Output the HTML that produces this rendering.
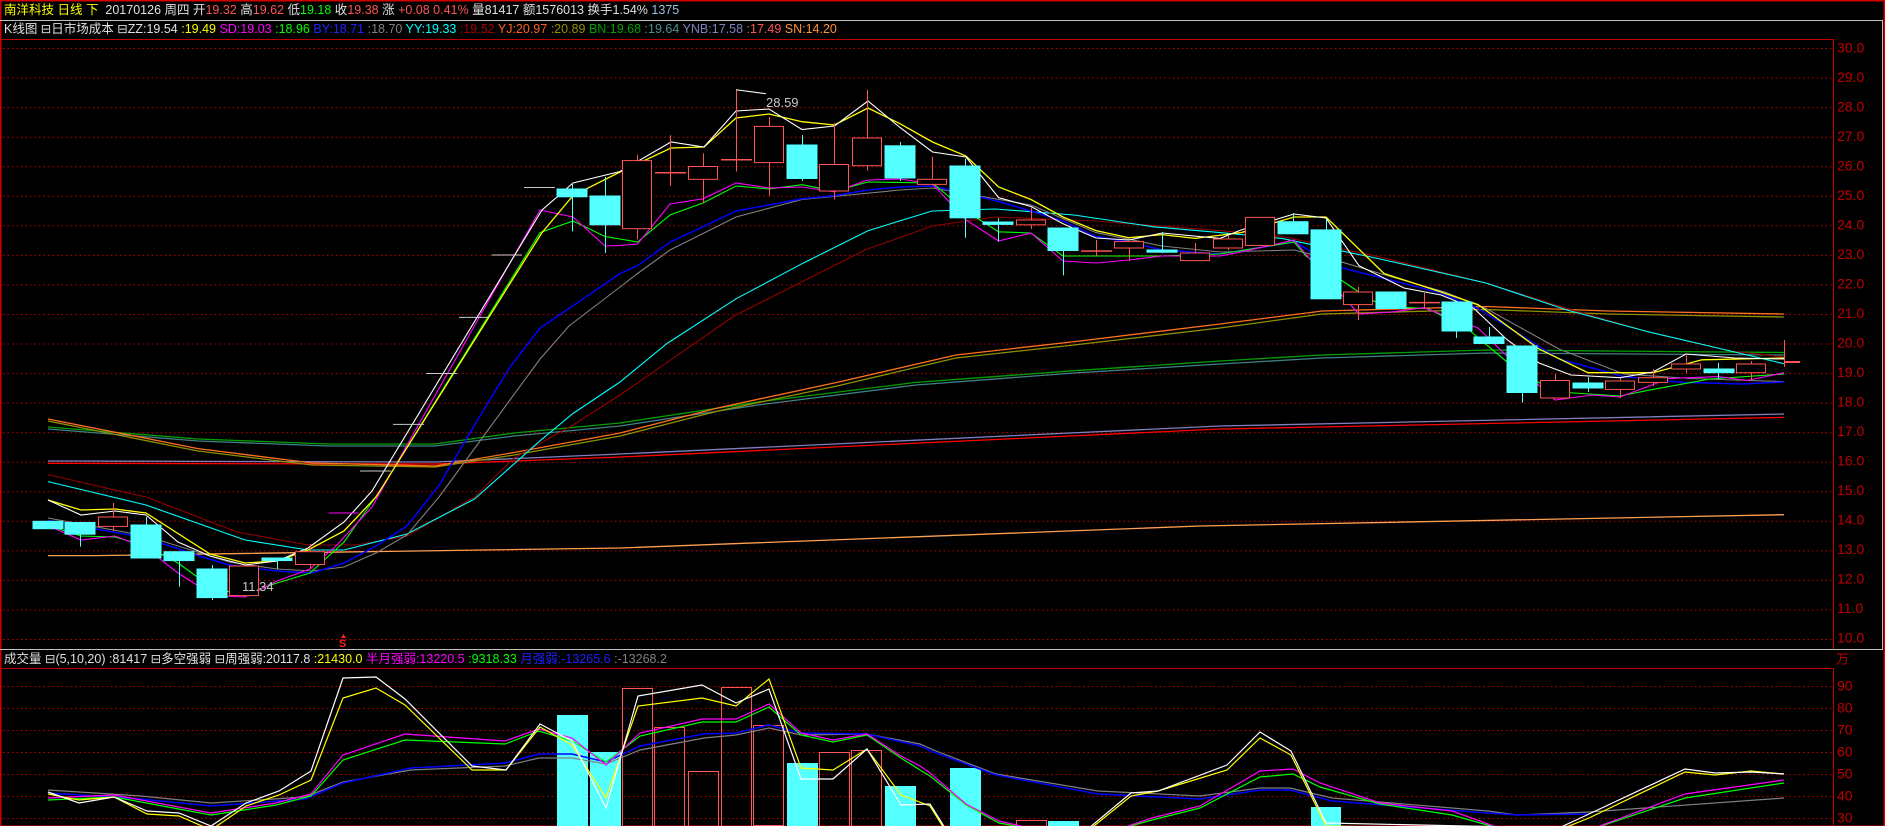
<!DOCTYPE html>
<html><head><meta charset="utf-8"><style>
html,body{margin:0;padding:0;background:#000;}
body{width:1885px;height:826px;overflow:hidden;position:relative;font-family:"Liberation Sans","Noto Sans CJK SC",sans-serif;}
.row{position:absolute;left:4px;white-space:pre;font-size:12.5px;line-height:16px;}
.w{color:#e0e0e0}.y{color:#ffff00}.r{color:#ff5454}.g{color:#00ff00}.m{color:#ff00ff}.b{color:#2020ff}.gr{color:#808080}.c{color:#00ffff}.dr{color:#a00000}.o{color:#ff6020}.ol{color:#909000}.dg{color:#00a000}.tg{color:#509090}.lv{color:#8080c0}.lo{color:#ff9040}.lb{color:#a0c0e0}
svg{position:absolute;left:0;top:0}
</style></head><body>
<svg width="1885" height="826" viewBox="0 0 1885 826" xmlns="http://www.w3.org/2000/svg">
<rect x="0" y="0" width="1885" height="826" fill="#000"/>
<!-- frames -->
<rect x="0.5" y="0.5" width="1884" height="826" fill="none" stroke="#d00000" stroke-width="2"/>
<line x1="0" y1="20.5" x2="1883" y2="20.5" stroke="#c0c0c0"/>
<line x1="1882.5" y1="20" x2="1882.5" y2="649" stroke="#c0c0c0"/>
<line x1="0" y1="649.5" x2="1883" y2="649.5" stroke="#c0c0c0"/>
<line x1="2" y1="39.5" x2="1833" y2="39.5" stroke="#c00000"/>
<line x1="1833.5" y1="39" x2="1833.5" y2="649" stroke="#c00000"/>
<line x1="2" y1="668.5" x2="1833" y2="668.5" stroke="#c00000"/>
<line x1="1833.5" y1="668" x2="1833.5" y2="826" stroke="#c00000"/>
<!-- grid main -->
<g stroke="#c00000" stroke-dasharray="1.5 3" stroke-width="1">
<line x1="3" x2="1833" y1="48.5" y2="48.5"/><line x1="3" x2="1833" y1="78" y2="78"/><line x1="3" x2="1833" y1="107.6" y2="107.6"/><line x1="3" x2="1833" y1="137.2" y2="137.2"/><line x1="3" x2="1833" y1="166.7" y2="166.7"/><line x1="3" x2="1833" y1="196.3" y2="196.3"/><line x1="3" x2="1833" y1="225.8" y2="225.8"/><line x1="3" x2="1833" y1="255.4" y2="255.4"/><line x1="3" x2="1833" y1="284.9" y2="284.9"/><line x1="3" x2="1833" y1="314.5" y2="314.5"/><line x1="3" x2="1833" y1="344" y2="344"/><line x1="3" x2="1833" y1="373.6" y2="373.6"/><line x1="3" x2="1833" y1="403.1" y2="403.1"/><line x1="3" x2="1833" y1="432.7" y2="432.7"/><line x1="3" x2="1833" y1="462.2" y2="462.2"/><line x1="3" x2="1833" y1="491.8" y2="491.8"/><line x1="3" x2="1833" y1="521.3" y2="521.3"/><line x1="3" x2="1833" y1="550.9" y2="550.9"/><line x1="3" x2="1833" y1="580.4" y2="580.4"/><line x1="3" x2="1833" y1="610" y2="610"/><line x1="3" x2="1833" y1="639.5" y2="639.5"/>
<line x1="3" x2="1833" y1="686.5" y2="686.5"/><line x1="3" x2="1833" y1="708.5" y2="708.5"/><line x1="3" x2="1833" y1="730.5" y2="730.5"/><line x1="3" x2="1833" y1="752.5" y2="752.5"/><line x1="3" x2="1833" y1="774.5" y2="774.5"/><line x1="3" x2="1833" y1="796.5" y2="796.5"/><line x1="3" x2="1833" y1="818.5" y2="818.5"/>
</g>
<g font-family="Liberation Sans, sans-serif" font-size="14" fill="#c00000" dominant-baseline="middle">
<text x="1837" y="49">30.0</text><text x="1837" y="78.5">29.0</text><text x="1837" y="108">28.0</text><text x="1837" y="137.5">27.0</text><text x="1837" y="167">26.0</text><text x="1837" y="196.5">25.0</text><text x="1837" y="226">24.0</text><text x="1837" y="255.5">23.0</text><text x="1837" y="285">22.0</text><text x="1837" y="314.5">21.0</text><text x="1837" y="344">20.0</text><text x="1837" y="373.5">19.0</text><text x="1837" y="403">18.0</text><text x="1837" y="432.5">17.0</text><text x="1837" y="462">16.0</text><text x="1837" y="491.5">15.0</text><text x="1837" y="521">14.0</text><text x="1837" y="550.5">13.0</text><text x="1837" y="580">12.0</text><text x="1837" y="609.5">11.0</text><text x="1837" y="639">10.0</text>
<text x="1837" y="687">90</text><text x="1837" y="709">80</text><text x="1837" y="731">70</text><text x="1837" y="753">60</text><text x="1837" y="775">50</text><text x="1837" y="797">40</text><text x="1837" y="819">30</text>
<text x="1836" y="660" font-family="Noto Sans CJK SC, sans-serif" font-size="13">万</text>
</g>
<!-- long MAs -->
<g fill="none" stroke-width="1.3">
<polyline stroke="#ffa050" points="48,555.6 97,555.6 620,548 1200,526 1784,514.7"/>
<polyline stroke="#8080c0" points="48,461 435,462 620,454 1220,426 1784,414"/>
<polyline stroke="#ff0000" points="48,463.4 435,464 620,457 1220,429 1784,417.4"/>
<polyline stroke="#408080" points="48,429 198,441 328,446 435,446 514,436 620,426 758,405 916,385 1074,373 1220,364 1322,358 1486,353 1784,355"/>
<polyline stroke="#00a000" points="48,427 198,439 328,444 435,444 514,433 620,423 758,402 916,382.4 1074,370.7 1220,361 1322,355 1486,350 1784,352.5"/>
<polyline stroke="#909000" points="48,421 198,451 312,465 435,467 514,455 620,436 718,411 837,386 956,358 1074,345 1220,328 1322,314 1486,309.5 1608,314 1784,317"/>
<polyline stroke="#ff7020" points="48,419 198,448.6 312,463 435,466 514,452.5 620,433 718.6,407.7 837,382.4 956,355 1074.5,341.6 1220,324 1322.4,311 1486,306.5 1608,311 1784,314"/>
</g>
<g fill="none" stroke-width="1.1">
<polyline stroke="#900000" points="48,474.6 146,497 237,532 308,545 356,545 407,536 474.5,497 514,458 573,425 620,395 734,316 865,250 932,226 995,217 1094,221 1220,230.6 1282,236.5 1375.5,256 1486,283 1567,308.5 1649,332 1730,351 1784,357"/>
<polyline stroke="#00ffff" points="48,481.6 146,505 245,540 308,550 344,550 407,534 474.5,499 540,440.8 573,413.5 620,382 667,343.5 736,298.8 802,263.7 868,230.7 932,211 995,209 1074,215 1153.6,226.8 1220,232.6 1282,238.4 1375.5,258 1486,283 1567,310 1649,332 1730.6,351 1784,363.7"/>
<polyline stroke="#808080" points="48,518 146,536 229,562 277,569 312,571 344,567 376,553 407,535 439,497 474.5,448.5 540,359 569,326 620,287 637.6,273.5 670,250 736,217 802,199.5 900.5,190 932.5,188 1031,205 1096,232.6 1162,246 1220,252 1294,250 1341,261.8 1392,277 1445,292 1486,308.5 1559,349 1624,374 1690,378.5 1784,381.6"/>
<polyline stroke="#0000ff" stroke-width="1.5" points="48,520.6 91,528 146,538 198,555.6 229,565 277,571 312,573 344,563 376,546 407,526 439,485.5 474.5,425 510,367 540,328 569,308.5 620,273.5 637.6,265.7 670,242 703,226.8 736,211 769,205 802,198.8 834.5,195.6 868,190 900.5,187 932.5,186 966,193.7 998.6,201.5 1031,211 1063,221 1096,236.5 1129,242 1162,250 1220,254 1294,242 1341,267.6 1392,280.5 1441,293 1478,308.5 1522,335.7 1559,359 1624,376.6 1682,382.4 1743,384 1784,382"/>
<polyline stroke="#00ff00" points="48,525.6 81,536 115,537 146,546 178,563 213.5,588.6 243,594.5 277,583 310,573 344,542 380,491 540,232.6 573,221 605,236.5 637.6,242 670,215 703,203 736,186 769,189 802,184.7 834.5,191 868,182 932.5,183 966,211 998.6,231.8 1031,233 1063,256 1162,256 1220,254 1294,242 1306,256 1363,295 1384,306.5 1428,308.5 1469,330 1522,374.6 1559,392 1620,396 1653,389.4 1710,379 1784,374"/>
<polyline stroke="#ff00ff" points="48,525.6 81,540 115,536 146,548 178,573 213.5,595.6 245,597 277,581 310,569 336,546 372,507 540,210 573,217 605,246 620,245.4 637.6,244 670,204 703,198.8 736,183 769,188 802,187 834.5,191.8 868,180 900.5,179 932.5,184 966,219.8 998.6,241 1031,233 1063,261 1096,263 1129,260 1162,256 1220,256 1241,252 1294,240 1322,273.5 1359,314 1392,312 1424,307.7 1478,328 1510,359 1555,400 1592,395 1620,397 1669,378.5 1718,376.6 1747,380.5 1784,372.7"/>
<polyline stroke="#ffff00" stroke-width="1.3" points="48,500 81,510 115,509 146,513 210,554 245,563 277,561 308,550 344,531 376,497 542,232.6 573,195.6 620,172 671,148 704,147 736,118 769,114 802,121.7 834.5,125 868,108 900,123.7 932.5,142 966,156 998.6,187 1031,199.5 1063,217 1096,230.6 1129,237.7 1162,234.6 1195,238.4 1241,232.6 1294,217 1326,217 1384,273.5 1441,292 1478,304.6 1539,349 1588,372.7 1653,372.7 1702,359.8 1784,358"/>
<polyline stroke="#ffffff" points="48,500 81,515 115,511 146,515 178,542 210,556 245,565 277,561 308,548 344,522 372,491 542,210 573,183 620,171.5 671,142 704,147 736,111 769,109 802,129.5 834.5,126 868,101 900,127.5 932.5,152 966,157 998.6,197.6 1031,206.5 1063,223.7 1096,238 1129,240 1162,233 1220,238.4 1241,230 1294,214 1326,218 1359,265.7 1404,288 1441,295 1474,308.5 1507,339.6 1539,363 1571,375 1620,377.7 1653,372 1686,354 1735,358 1784,359"/>
</g>
<!-- candles: down (cyan filled) -->
<g fill="#54ffff" stroke="#54ffff" stroke-width="1">
<rect x="33" y="521.3" width="30" height="7.4"/>
<line x1="80.5" y1="522" x2="80.5" y2="546.6"/><rect x="65" y="522.5" width="30" height="11.7"/>
<line x1="146.5" y1="517" x2="146.5" y2="558"/><rect x="131" y="525" width="30" height="33"/>
<line x1="179.5" y1="552" x2="179.5" y2="586.7"/><rect x="164" y="551.7" width="30" height="8.9"/>
<line x1="212.5" y1="565" x2="212.5" y2="600"/><rect x="197" y="569" width="30" height="28.6"/>
<line x1="277.5" y1="557.5" x2="277.5" y2="569"/><rect x="262" y="558" width="30" height="2.6"/>
<line x1="572.5" y1="183" x2="572.5" y2="231.4"/><rect x="557" y="189" width="30" height="7.8"/>
<line x1="605.5" y1="177" x2="605.5" y2="253"/><rect x="590" y="196" width="30" height="28.8"/>
<line x1="802.5" y1="135" x2="802.5" y2="181"/><rect x="787" y="145" width="30" height="33.5"/>
<line x1="900.5" y1="142" x2="900.5" y2="181"/><rect x="885" y="145.8" width="30" height="32.2"/>
<line x1="965.5" y1="158.7" x2="965.5" y2="237.7"/><rect x="950" y="166" width="30" height="51.8"/>
<line x1="998.5" y1="218" x2="998.5" y2="241.6"/><rect x="983" y="222" width="30" height="2.4"/>
<line x1="1063.5" y1="228" x2="1063.5" y2="275.4"/><rect x="1048" y="228" width="30" height="22.5"/>
<line x1="1162.5" y1="232" x2="1162.5" y2="253"/><rect x="1147" y="250" width="30" height="2.2"/>
<line x1="1293.5" y1="213" x2="1293.5" y2="234"/><rect x="1278" y="221.7" width="30" height="12.1"/>
<line x1="1326.5" y1="219" x2="1326.5" y2="299"/><rect x="1311" y="229.9" width="30" height="68.9"/>
<rect x="1376" y="292" width="30" height="16.5"/>
<line x1="1456.5" y1="302" x2="1456.5" y2="338"/><rect x="1442" y="302" width="30" height="29"/>
<line x1="1489.5" y1="327" x2="1489.5" y2="343.5"/><rect x="1474" y="337" width="30" height="6.5"/>
<line x1="1522.5" y1="346" x2="1522.5" y2="402.6"/><rect x="1507" y="346" width="30" height="46.5"/>
<line x1="1588.5" y1="377" x2="1588.5" y2="392"/><rect x="1573" y="383" width="30" height="5"/>
<line x1="1718.5" y1="363" x2="1718.5" y2="379"/><rect x="1704" y="369" width="30" height="3.7"/>
</g>
<!-- up (red hollow) -->
<g fill="none" stroke="#ff5454" stroke-width="1">
<line x1="113.5" y1="503" x2="113.5" y2="531"/><rect x="98.5" y="517" width="29" height="9.4" fill="#000"/>
<line x1="244.5" y1="564" x2="244.5" y2="597"/><rect x="229.5" y="566" width="29" height="29.6" fill="#000"/>
<line x1="310.5" y1="544" x2="310.5" y2="569"/><rect x="295.5" y="551.7" width="29" height="12.8" fill="#000"/>
<line x1="637.5" y1="154.8" x2="637.5" y2="239.2"/><rect x="622.5" y="160.6" width="29" height="68.1" fill="#000"/>
<line x1="670.5" y1="135.3" x2="670.5" y2="185.9"/><line x1="655" y1="172.7" x2="686" y2="172.7" stroke-width="1.5"/>
<line x1="703.5" y1="153.2" x2="703.5" y2="203.4"/><rect x="688.5" y="166.5" width="29" height="12.8" fill="#000"/>
<line x1="736.5" y1="89.8" x2="736.5" y2="171.5"/><line x1="721" y1="159.8" x2="752" y2="159.8" stroke-width="1.5"/>
<line x1="769.5" y1="117" x2="769.5" y2="195.6"/><rect x="754.5" y="126.4" width="29" height="36.2" fill="#000"/>
<line x1="834.5" y1="122.9" x2="834.5" y2="199.5"/><rect x="819.5" y="164.5" width="29" height="26.5" fill="#000"/>
<line x1="867.5" y1="89.8" x2="867.5" y2="170.7"/><rect x="852.5" y="138" width="29" height="27.7" fill="#000"/>
<line x1="932.5" y1="156.7" x2="932.5" y2="184.4"/><rect x="917.5" y="179.3" width="29" height="5.1" fill="#000"/>
<line x1="1031.5" y1="207" x2="1031.5" y2="229"/><rect x="1016.5" y="220" width="29" height="4.8" fill="#000"/>
<line x1="1096.5" y1="240" x2="1096.5" y2="256"/><line x1="1081" y1="251" x2="1112" y2="251" stroke-width="1.5"/>
<line x1="1129.5" y1="241.6" x2="1129.5" y2="261"/><rect x="1114.5" y="241.6" width="29" height="6.4" fill="#000"/>
<line x1="1195.5" y1="243" x2="1195.5" y2="260.6"/><rect x="1180.5" y="253" width="29" height="7.6" fill="#000"/>
<line x1="1228.5" y1="236" x2="1228.5" y2="250"/><rect x="1213.5" y="239" width="29" height="9" fill="#000"/>
<line x1="1260.5" y1="217" x2="1260.5" y2="246"/><rect x="1245.5" y="217.4" width="29" height="28" fill="#000"/>
<line x1="1358.5" y1="287" x2="1358.5" y2="320"/><rect x="1343.5" y="292" width="29" height="12.6" fill="#000"/>
<line x1="1424.5" y1="293" x2="1424.5" y2="309"/><line x1="1409" y1="302.6" x2="1440" y2="302.6" stroke-width="1.5"/>
<line x1="1555.5" y1="374" x2="1555.5" y2="398"/><rect x="1540.5" y="380.5" width="29" height="17.5" fill="#000"/>
<line x1="1620.5" y1="378" x2="1620.5" y2="398"/><rect x="1605.5" y="381" width="29" height="8.4" fill="#000"/>
<line x1="1653.5" y1="369" x2="1653.5" y2="386"/><rect x="1638.5" y="377.7" width="29" height="4.7" fill="#000"/>
<line x1="1686.5" y1="354" x2="1686.5" y2="373"/><rect x="1671.5" y="364" width="29" height="5" fill="#000"/>
<line x1="1751.5" y1="361" x2="1751.5" y2="381"/><rect x="1736.5" y="364" width="29" height="8.7" fill="#000"/>
<line x1="1784.5" y1="340" x2="1784.5" y2="367"/><line x1="1784" y1="362" x2="1800" y2="362" stroke-width="2"/>
</g>
<!-- limit-up dashes -->
<g stroke="#c8c8c8" stroke-width="1">
<line x1="360" y1="471" x2="391" y2="471"/><line x1="393" y1="424.4" x2="424" y2="424.4"/><line x1="426" y1="373.5" x2="457" y2="373.5"/><line x1="459" y1="317.4" x2="489.5" y2="317.4"/><line x1="491.5" y1="255" x2="522" y2="255"/><line x1="524" y1="187.5" x2="555" y2="187.5"/>
<line x1="736" y1="89.8" x2="766" y2="93.7" stroke="#fff"/>
</g>
<line x1="328.6" y1="513" x2="358.6" y2="513" stroke="#ff00ff"/>
<text x="766" y="107" font-family="Liberation Sans, sans-serif" font-size="13" fill="#c8c8c8">28.59</text>
<text x="242" y="591" font-family="Liberation Sans, sans-serif" font-size="13" fill="#c8c8c8">11.34</text>
<text x="339" y="647" font-family="Liberation Sans, sans-serif" font-size="11" font-weight="bold" fill="#ff2020">S</text>
<path d="M341 638 L343.5 634 L346 638 Z" fill="#ff2020"/>
<!-- volume bars -->
<g fill="#54ffff">
<rect x="557" y="715" width="31" height="111"/><rect x="590" y="752" width="31" height="74"/><rect x="787" y="763" width="31" height="63"/><rect x="885" y="786" width="31" height="40"/><rect x="950" y="768" width="31" height="58"/><rect x="1048" y="821" width="31" height="5"/><rect x="1311" y="807" width="30" height="19"/>
</g>
<g fill="none" stroke="#ff5454">
<rect x="622.5" y="688.5" width="30" height="140"/><rect x="654.5" y="727.5" width="30" height="100"/><rect x="688.5" y="771.5" width="30" height="60"/><rect x="721.5" y="687.5" width="30" height="140"/><rect x="753.5" y="725.5" width="30" height="100"/><rect x="819.5" y="752.5" width="30" height="80"/><rect x="851.5" y="750.5" width="30" height="80"/><rect x="1016.5" y="820.5" width="30" height="20"/>
</g>
<g fill="none" stroke-width="1.2">
<polyline stroke="#808080" points="48,790 141,796 211,803 305,797 343,782 411,770 505,766 539,758 572,758 606,764 640,750 704,738 736,735 769,728 801,735 867,734 920,744 936,751 996,774 1098,791 1200,796 1260,788 1290,788 1332,798 1488,811 1517,815 1589,812 1784,798"/>
<polyline stroke="#0000ff" stroke-width="1.5" points="48,793 141,799 211,806 305,799 343,783 411,768 505,763 539,754 572,754 606,762 640,746 704,734 736,733 769,725 801,733 867,734 920,746 936,753 996,775 1098,794 1200,799 1260,790 1290,790 1332,801 1488,813 1517,815 1589,814"/>
<polyline stroke="#00ff00" points="48,800 114,797 211,815 276,805 311,796 343,760 405,740 505,744 539,731 572,741 606,762 640,736 702,722 736,722 769,707 801,735 833,742 867,735 901,758 920,770 930,776 966,805 999,823 1038,830 1116,830 1152,820 1200,808 1260,777 1293,774 1320,787 1380,804 1452,815 1505,830 1589,830 1685,798 1784,783"/>
<polyline stroke="#ff00ff" points="48,798 114,795 211,813 276,803 311,794 343,755 405,734 505,741 539,729 572,738 606,765 640,733 702,719 736,719 769,704 801,733 833,740 867,734 901,756 920,766 930,773 966,804 999,821 1038,830 1116,830 1152,818 1200,806 1260,771 1293,769 1320,783 1380,803 1452,811 1505,830 1589,830 1685,794 1784,780"/>
<polyline stroke="#ffff00" points="48,794 79,800 114,797 147,814 179,816 211,830 246,806 279,795 311,780 343,698 376,688 405,705 472,770 506,770 540,727 572,745 606,798 638,706 702,698 736,706 769,679 801,768 833,770 867,749 901,795 930,806 945,830 1089,830 1131,796 1158,791 1227,770 1260,738 1291,755 1326,826 1559,830 1589,818 1685,772 1715,775 1751,771 1784,774"/>
<polyline stroke="#ffffff" points="48,792 79,803 114,797 147,811 179,813 211,826 246,803 279,791 311,771 343,678 376,677 405,699 472,766 506,770 540,724 572,741 606,808 638,696 702,685 736,703 769,689 801,779 833,779 867,749 901,805 930,804 945,828 1089,828 1131,793 1158,791 1227,765 1260,732 1291,751 1326,823 1559,828 1589,814 1685,769 1715,773 1751,772 1784,774"/>
</g>
</svg>
<div class="row" style="top:2px;"><span class="y">南洋科技 日线 下</span>  <span class="w">20170126 周四 开</span><span class="r">19.32</span> <span class="w">高</span><span class="r">19.62</span> <span class="w">低</span><span class="g">19.18</span> <span class="w">收</span><span class="r">19.38</span> <span class="w">涨</span> <span class="r">+0.08 0.41%</span> <span class="w">量81417 额1576013 换手1.54%</span> <span class="lb">1375</span></div>
<div class="row" style="top:21px;"><span class="w">K线图 ⊟日市场成本 ⊟ZZ:19.54</span> <span class="y">:19.49</span> <span class="m">SD:19.03</span> <span class="g">:18.96</span> <span class="b">BY:18.71</span> <span class="gr">:18.70</span> <span class="c">YY:19.33</span> <span class="dr">:19.52</span> <span class="o">YJ:20.97</span> <span class="ol">:20.89</span> <span class="dg">BN:19.68</span> <span class="tg">:19.64</span> <span class="lv">YNB:17.58</span> <span class="r">:17.49</span> <span class="lo">SN:14.20</span></div>
<div class="row" style="top:651px;"><span class="w">成交量 ⊟(5,10,20) :81417 ⊟多空强弱 ⊟周强弱:20117.8</span> <span class="y">:21430.0</span> <span class="m">半月强弱:13220.5</span> <span class="g">:9318.33</span> <span class="b">月强弱:-13265.6</span> <span class="gr">:-13268.2</span></div>
</body></html>
